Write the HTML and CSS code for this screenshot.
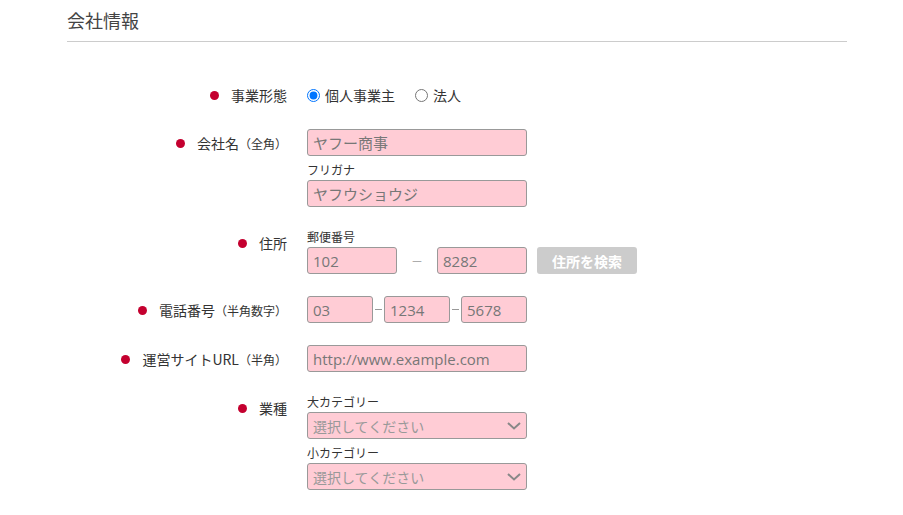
FILE: index.html
```html
<!DOCTYPE html>
<html lang="ja">
<head>
  <meta charset="UTF-8">
  <meta name="viewport" content="width=device-width, initial-scale=1.0">
  <title>会社情報</title>
  <link rel="stylesheet" href="styles.css">
</head>
<body>
  <div class="page">
    <h2 class="section-title">会社情報</h2>

    <form class="company-form">
      <div class="form-row form-row--center">
        <div class="form-label"><span class="req"></span>事業形態</div>
        <div class="form-field radios">
          <label class="radio"><input type="radio" name="type" checked>個人事業主</label>
          <label class="radio"><input type="radio" name="type">法人</label>
        </div>
      </div>

      <div class="form-row">
        <div class="form-label"><span class="req"></span>会社名<small>（全角）</small></div>
        <div class="form-field">
          <input class="text-input wide" type="text" value="ヤフー商事">
          <div class="sub-label sub-label--gap">フリガナ</div>
          <input class="text-input wide" type="text" value="ヤフウショウジ">
        </div>
      </div>

      <div class="form-row">
        <div class="form-label"><span class="req"></span>住所</div>
        <div class="form-field">
          <div class="sub-label">郵便番号</div>
          <div class="inline">
            <input class="text-input zip" type="text" value="102">
            <span class="dash dash--zip">－</span>
            <input class="text-input zip" type="text" value="8282">
            <button type="button" class="search-btn">住所を検索</button>
          </div>
        </div>
      </div>

      <div class="form-row">
        <div class="form-label"><span class="req"></span>電話番号<small>（半角数字）</small></div>
        <div class="form-field inline">
          <input class="text-input tel" type="text" value="03">
          <span class="dash dash--tel"></span>
          <input class="text-input tel" type="text" value="1234">
          <span class="dash dash--tel"></span>
          <input class="text-input tel" type="text" value="5678">
        </div>
      </div>

      <div class="form-row">
        <div class="form-label"><span class="req"></span>運営サイトURL<small>（半角）</small></div>
        <div class="form-field">
          <input class="text-input wide" type="text" value="http://www.example.com">
        </div>
      </div>

      <div class="form-row">
        <div class="form-label"><span class="req"></span>業種</div>
        <div class="form-field">
          <div class="sub-label">大カテゴリー</div>
          <div class="select-wrap">
            <select class="select-input"><option>選択してください</option></select>
            <svg class="chevron" width="14" height="8" viewBox="0 0 14 8"><path d="M1 1l6 5.5L13 1" fill="none" stroke="#888" stroke-width="2"/></svg>
          </div>
          <div class="sub-label sub-label--gap">小カテゴリー</div>
          <div class="select-wrap">
            <select class="select-input"><option>選択してください</option></select>
            <svg class="chevron" width="14" height="8" viewBox="0 0 14 8"><path d="M1 1l6 5.5L13 1" fill="none" stroke="#888" stroke-width="2"/></svg>
          </div>
        </div>
      </div>
    </form>
  </div>
</body>
</html>
```

FILE: styles.css
```css
body {
  margin: 0;
  font-family: "Noto Sans CJK JP", "Open Sans", sans-serif;
  color: #333;
  background-color: #fff;
}

.page {
  width: 780px;
  margin-left: 67px;
}

.section-title {
  margin: 0;
  padding: 8px 0 9px;
  font-size: 18px;
  font-weight: normal;
  line-height: 24px;
  color: #444;
  border-bottom: 1px solid #ccc;
}

.company-form {
  margin-top: 41px;
  display: flex;
  flex-direction: column;
  gap: 22px;
}

.form-row {
  display: grid;
  grid-template-columns: 220px 1fr;
  column-gap: 20px;
  align-items: start;
}

.form-row--center {
  align-items: center;
}

.form-label {
  display: flex;
  justify-content: flex-end;
  align-items: center;
  padding-top: 6px;
  font-size: 14px;
  line-height: 17px;
  color: #333;
}

.form-row--center .form-label {
  padding-top: 0;
}

.form-label small {
  font-size: 12px;
}

.req {
  width: 9px;
  height: 9px;
  border-radius: 50%;
  background-color: #c4002f; /* crimson */
  margin-right: 12px;
}

.form-field {
  display: flex;
  flex-direction: column;
  align-items: flex-start;
}

.radios {
  flex-direction: row;
  align-items: center;
  height: 24px;
  gap: 20px;
}

.radio {
  display: flex;
  align-items: center;
  font-size: 14px;
  line-height: 17px;
}

.radio input {
  margin: 0 5px 0 0;
  width: 13px;
  height: 13px;
}

.sub-label {
  font-size: 12px;
  line-height: 16px;
  margin-bottom: 2px;
  color: #333;
}

.sub-label--gap {
  margin-top: 6px;
}

.text-input,
.select-input {
  box-sizing: border-box;
  height: 27px;
  padding: 0 5px;
  border: 1px solid #999;
  border-radius: 3px;
  background-color: #ffccd5; /* pink */
  font-family: "Open Sans", "Noto Sans CJK JP", sans-serif;
  font-size: 15px;
  color: #777;
  margin: 0;
}

.wide {
  width: 220px;
}

.zip {
  width: 90px;
}

.tel {
  width: 66px;
}

.inline {
  display: flex;
  flex-direction: row;
  align-items: center;
}

.dash {
  color: #999;
  font-size: 12px;
  text-align: center;
}

.dash--zip {
  width: 40px;
}

.dash--tel {
  width: 7px;
  height: 1px;
  margin: 0 2px;
  background-color: #999;
}

.search-btn {
  margin-left: 10px;
  width: 100px;
  height: 27px;
  border: none;
  border-radius: 3px;
  background-color: #ccc;
  color: #fff;
  font-family: "Noto Sans CJK JP", sans-serif;
  font-size: 14px;
  font-weight: bold;
  padding: 0;
}

.select-wrap {
  position: relative;
  width: 220px;
}

.select-input {
  width: 220px;
  appearance: none;
  -webkit-appearance: none;
  font-family: "Noto Sans CJK JP", sans-serif;
  font-size: 14px;
  color: #999;
}

.chevron {
  position: absolute;
  right: 6px;
  top: 10px;
  pointer-events: none;
}
```
